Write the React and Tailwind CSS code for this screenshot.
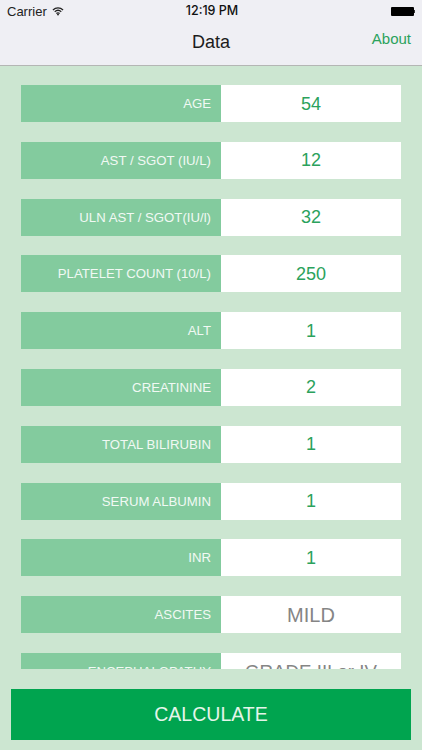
const rows = [
  { label: "AGE", value: "54" },
  { label: "AST / SGOT (IU/L)", value: "12" },
  { label: "ULN AST / SGOT(IU/l)", value: "32" },
  { label: "PLATELET COUNT (10/L)", value: "250" },
  { label: "ALT", value: "1" },
  { label: "CREATININE", value: "2" },
  { label: "TOTAL BILIRUBIN", value: "1" },
  { label: "SERUM ALBUMIN", value: "1" },
  { label: "INR", value: "1" },
  { label: "ASCITES", value: "MILD", kind: "select" },
  { label: "ENCEPHALOPATHY", value: "GRADE III or IV", kind: "long" },
];

const valueStyles = {
  number: "text-[18px] text-[#2ba25c]",
  select: "text-[20px] text-[#858585]",
  long: "text-[18.7px] text-[#858585]",
};

function Wifi() {
  return (
    <svg width="12" height="9" viewBox="0 0 14 11" fill="none" stroke="#222" strokeWidth="1.5">
      <path d="M0.8 3.6C4.4 0.2 9.6 0.2 13.2 3.6" />
      <path d="M3 5.8C5.4 3.6 8.6 3.6 11 5.8" />
      <path d="M5 7.9C6.2 6.9 7.8 6.9 9 7.9" />
      <path d="M7 10.6L5.6 9.1C6.4 8.5 7.6 8.5 8.4 9.1Z" fill="#222" stroke="none" />
    </svg>
  );
}

function Row({ label, value, kind = "number" }) {
  return (
    <div className="flex h-[37px] shrink-0">
      <div className="flex w-[200px] items-center justify-end bg-[#83cb9e] pr-[10px] pt-[1px] text-[13.2px] text-[#f1f9f4]">
        {label}
      </div>
      <div className={"flex w-[180px] items-center justify-center bg-white pt-[1px] " + valueStyles[kind]}>
        {value}
      </div>
    </div>
  );
}

export default function App() {
  return (
    <div className="flex h-[750px] w-[422px] flex-col overflow-hidden bg-[#cce6d1] font-['Liberation_Sans',sans-serif]">
      <header className="h-[66px] shrink-0 border-b border-[#b4b6b4] bg-[#efeff4]">
        <div className="flex h-[21px] items-center justify-between px-[7px] pt-[1px]">
          <div className="flex w-[120px] items-center gap-[5px] text-[13px] text-[#222]">
            <span className="pt-[1px]">Carrier</span>
            <Wifi />
          </div>
          <div className="ml-[2px] pt-[1px] font-['Inter',sans-serif] text-[12.5px] font-medium text-[#111]">12:19 PM</div>
          <div className="flex w-[120px] items-center justify-end">
            <div className="h-[9px] w-[23px] rounded-[1px] bg-black" />
            <div className="h-[3px] w-[1px] bg-[#333]" />
          </div>
        </div>
        <div className="relative flex h-[44px] items-center justify-center pb-[1px] text-[18px] text-[#1c1c1c]">
          Data
          <span className="absolute right-[11px] top-[7px] text-[15px] text-[#2ba25c]">About</span>
        </div>
      </header>
      <main className="mx-[21px] mt-[19px] flex h-[583.5px] shrink-0 flex-col gap-[19.8px] overflow-hidden">
        {rows.map((r) => (
          <Row key={r.label} {...r} />
        ))}
      </main>
      <button className="mx-[11px] mt-[20px] flex h-[51px] w-[400px] shrink-0 items-center justify-center bg-[#00a44f] pt-[2px] text-[19.5px] text-[#e4f5ea]">
        CALCULATE
      </button>
    </div>
  );
}
